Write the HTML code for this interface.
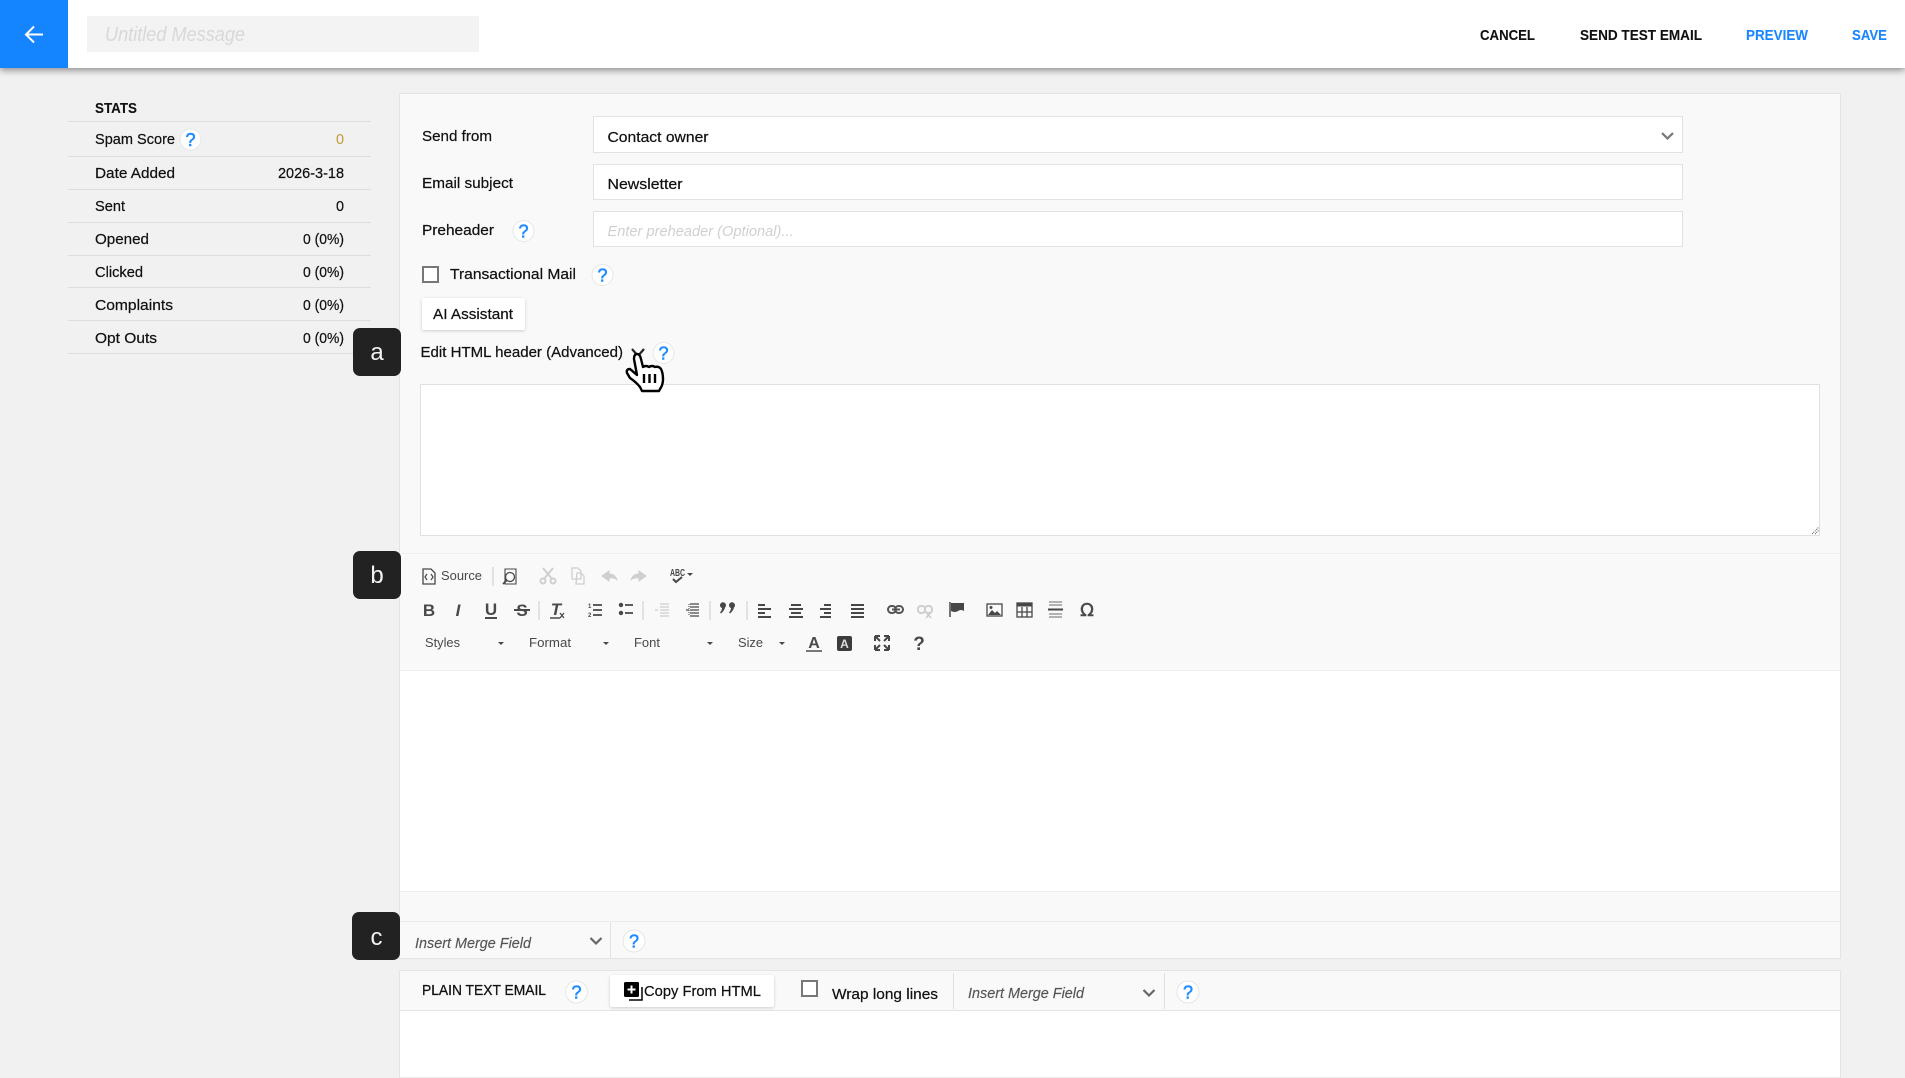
<!DOCTYPE html>
<html lang="en"><head><meta charset="utf-8"><title>Untitled Message</title>
<style>
html,body{margin:0;padding:0;width:1905px;height:1078px;overflow:hidden;background:#f1f1f1}
.b{position:absolute;box-sizing:border-box}
svg{position:absolute;left:0;top:0}
text{font-family:"Liberation Sans",sans-serif;font-size:15px;fill:#111;stroke:#111;stroke-width:.22}
.i{font-style:italic;stroke:none}.m{fill:#555;font-style:italic;stroke:#555;stroke-width:.15}.s{font-weight:bold;stroke-width:.1}
.h{font-size:18px;fill:#1f8bff;stroke:#1f8bff;stroke-width:.55;text-anchor:middle}
.k{font-size:13px;fill:#484848;stroke:none}
.t{font-size:17px;font-weight:bold;fill:#4a4a4a;stroke:none;text-anchor:middle}
.w{font-size:24px;fill:#f2f2f2;stroke:none;text-anchor:middle}
.hc{fill:#fff;stroke:#e6e6e6;stroke-width:1}
.ic{fill:none;stroke:#474747;stroke-width:2}
.dis{fill:none;stroke:#cfcfcf;stroke-width:2}
.bl{font-weight:bold;fill:#1a86ff;stroke:#1a86ff;stroke-width:.1}
</style></head><body>
<div class="b" style="left:399px;top:93px;width:1442px;height:866px;background:#f9f9f9;border:1px solid #e4e4e4"></div>
<div class="b" style="left:0;top:0;width:1905px;height:68px;background:#fff;box-shadow:0 2px 7px rgba(0,0,0,.45)"></div>
<div class="b" style="left:0;top:0;width:68px;height:68px;background:#1584ff"></div>
<div class="b" style="left:87px;top:16px;width:392px;height:36px;background:#f3f3f3"></div>
<div class="b" style="left:68px;top:121px;width:303px;height:1px;background:#ddd"></div>
<div class="b" style="left:68px;top:156px;width:303px;height:1px;background:#ddd"></div>
<div class="b" style="left:68px;top:189px;width:303px;height:1px;background:#ddd"></div>
<div class="b" style="left:68px;top:222px;width:303px;height:1px;background:#ddd"></div>
<div class="b" style="left:68px;top:255px;width:303px;height:1px;background:#ddd"></div>
<div class="b" style="left:68px;top:287px;width:303px;height:1px;background:#ddd"></div>
<div class="b" style="left:68px;top:320px;width:303px;height:1px;background:#ddd"></div>
<div class="b" style="left:68px;top:353px;width:303px;height:1px;background:#ddd"></div>
<div class="b" style="left:593px;top:116px;width:1090px;height:37px;background:#fff;border:1px solid #e2e2e2"></div>
<div class="b" style="left:593px;top:164px;width:1090px;height:36px;background:#fff;border:1px solid #e2e2e2"></div>
<div class="b" style="left:593px;top:211px;width:1090px;height:36px;background:#fff;border:1px solid #e2e2e2"></div>
<div class="b" style="left:422px;top:266px;width:17px;height:17px;background:#fff;border:2px solid #777"></div>
<div class="b" style="left:422px;top:298px;width:103px;height:32px;background:#fff;border-radius:2px;box-shadow:0 1px 3px rgba(0,0,0,.18)"></div>
<div class="b" style="left:420px;top:384px;width:1400px;height:152px;background:#fff;border:1px solid #e0e0e0"></div>
<div class="b" style="left:400px;top:553px;width:1440px;height:1px;background:#efefef"></div>
<div class="b" style="left:400px;top:670px;width:1440px;height:221px;background:#fff;border-top:1px solid #efefef"></div>
<div class="b" style="left:400px;top:891px;width:1440px;height:1px;background:#efefef"></div>
<div class="b" style="left:400px;top:921px;width:1440px;height:1px;background:#ececec"></div>
<div class="b" style="left:610px;top:922px;width:1px;height:36px;background:#e4e4e4"></div>
<div class="b" style="left:399px;top:970px;width:1442px;height:108px;background:#fff;border:1px solid #e4e4e4;border-bottom:1px solid #e9e9e9"></div>
<div class="b" style="left:400px;top:971px;width:1440px;height:40px;background:#f9f9f9;border-bottom:1px solid #e2e2e2"></div>
<div class="b" style="left:610px;top:975px;width:164px;height:32px;background:#fff;border-radius:2px;box-shadow:0 1px 3px rgba(0,0,0,.18)"></div>
<div class="b" style="left:801px;top:980px;width:17px;height:17px;background:#fff;border:2px solid #777"></div>
<div class="b" style="left:953px;top:973px;width:1px;height:36px;background:#e0e0e0"></div>
<div class="b" style="left:1164px;top:973px;width:1px;height:36px;background:#e0e0e0"></div>
<div class="b" style="left:353px;top:328px;width:48px;height:48px;background:#222;border-radius:7px"></div>
<div class="b" style="left:353px;top:551px;width:48px;height:48px;background:#222;border-radius:7px"></div>
<div class="b" style="left:352px;top:912px;width:48px;height:48px;background:#222;border-radius:7px"></div>

<svg width="1905" height="1078" viewBox="0 0 1905 1078" xmlns="http://www.w3.org/2000/svg">
<!-- header -->
<path d="M43 34.500H27M34 26.500l-8 8 8 8" fill="none" stroke="#fff" stroke-width="2"/>
<text class="i" x="105" y="41" style="font-size:20px;fill:#d8d8d8" textLength="140" lengthAdjust="spacingAndGlyphs">Untitled Message</text>
<text class="s" x="1480" y="40" textLength="55" lengthAdjust="spacingAndGlyphs" style="font-size:15px">CANCEL</text>
<text class="s" x="1580" y="40" textLength="122" lengthAdjust="spacingAndGlyphs" style="font-size:15px">SEND TEST EMAIL</text>
<text class="bl" x="1746" y="40" textLength="62" lengthAdjust="spacingAndGlyphs" style="font-size:15px">PREVIEW</text>
<text class="bl" x="1852" y="40" textLength="35" lengthAdjust="spacingAndGlyphs" style="font-size:15px">SAVE</text>
<!-- stats -->
<text class="s" x="95" y="113" textLength="42" lengthAdjust="spacingAndGlyphs" style="font-size:15px">STATS</text>
<text x="95" y="144" textLength="80" lengthAdjust="spacingAndGlyphs">Spam Score</text>
<text x="95" y="178" textLength="80" lengthAdjust="spacingAndGlyphs">Date Added</text>
<text x="95" y="211" textLength="30" lengthAdjust="spacingAndGlyphs">Sent</text>
<text x="95" y="244" textLength="54" lengthAdjust="spacingAndGlyphs">Opened</text>
<text x="95" y="277" textLength="48" lengthAdjust="spacingAndGlyphs">Clicked</text>
<text x="95" y="310" textLength="78" lengthAdjust="spacingAndGlyphs">Complaints</text>
<text x="95" y="343" textLength="62" lengthAdjust="spacingAndGlyphs">Opt Outs</text>
<text x="336" y="144" style="fill:#c49a3a;stroke:none" textLength="8" lengthAdjust="spacingAndGlyphs">0</text>
<text x="278" y="178" textLength="66" lengthAdjust="spacingAndGlyphs">2026-3-18</text>
<text x="336" y="211" textLength="8" lengthAdjust="spacingAndGlyphs">0</text>
<text x="303" y="244" textLength="41" lengthAdjust="spacingAndGlyphs">0 (0%)</text>
<text x="303" y="277" textLength="41" lengthAdjust="spacingAndGlyphs">0 (0%)</text>
<text x="303" y="310" textLength="41" lengthAdjust="spacingAndGlyphs">0 (0%)</text>
<text x="303" y="343" textLength="41" lengthAdjust="spacingAndGlyphs">0 (0%)</text>
<circle class="hc" cx="190.500" cy="139.500" r="10.500"/><text class="h" x="190.500" y="146">?</text>
<!-- form -->
<text x="422" y="141" textLength="70" lengthAdjust="spacingAndGlyphs">Send from</text>
<text x="422" y="188" textLength="91" lengthAdjust="spacingAndGlyphs">Email subject</text>
<text x="422" y="235" textLength="72" lengthAdjust="spacingAndGlyphs">Preheader</text>
<circle class="hc" cx="523.500" cy="231" r="10.500"/><text class="h" x="523.500" y="237.500">?</text>
<text x="607.500" y="142" textLength="101" lengthAdjust="spacingAndGlyphs">Contact owner</text>
<text x="607.500" y="189" textLength="75" lengthAdjust="spacingAndGlyphs">Newsletter</text>
<text class="i" x="607.500" y="236" style="fill:#d0d0d0" textLength="186" lengthAdjust="spacingAndGlyphs">Enter preheader (Optional)...</text>
<path d="M1662 133l5.500 5.500 5.500-5.500" fill="none" stroke="#777" stroke-width="2.200"/>
<text x="450" y="279" textLength="126" lengthAdjust="spacingAndGlyphs">Transactional Mail</text>
<circle class="hc" cx="602.500" cy="275" r="10.500"/><text class="h" x="602.500" y="281.500">?</text>
<text x="433" y="319" textLength="80" lengthAdjust="spacingAndGlyphs">AI Assistant</text>
<text x="420.500" y="357" textLength="202.500" lengthAdjust="spacingAndGlyphs">Edit HTML header (Advanced)</text>
<circle class="hc" cx="663.500" cy="353" r="10.500"/><text class="h" x="663.500" y="359.500">?</text>
<path d="M632 349l6 7 6-7" fill="none" stroke="#222" stroke-width="2.200"/>
<!-- hand cursor -->
<path d="M634 359q0-5 3-5 3 0 4 5l2 8q3-2 6 0 3-2 6 0 4-1 6 2 2 4 2 10 0 6-3 10l-1 2h-17l-2-4q-4-5-10-9l-3-5q-1-4 3-4l7 6z" fill="#fff" stroke="#000" stroke-width="2.400" stroke-linejoin="round"/>
<path d="M644 374v9M649.500 374v9M655 374v9" stroke="#000" stroke-width="2.400"/>
<text class="w" x="377" y="360">a</text>
<text class="w" x="377" y="583">b</text>
<text class="w" x="376.500" y="945">c</text>
<path d="M1812 534l7-7M1815 534l4-4" stroke="#555" stroke-width="1" stroke-dasharray="1 1"/>
<!-- toolbar row 1 -->
<path d="M423 569h8l4 4v11h-12z" class="ic" style="stroke-width:1.300"/>
<path d="M427 574l-2 3 2 3M431 574l2 3-2 3" fill="none" stroke="#474747" stroke-width="1.200"/>
<text class="k" x="441" y="580" textLength="41" lengthAdjust="spacingAndGlyphs">Source</text>
<path d="M493 567v19" stroke="#ccc"/>
<path d="M505 569h11v15h-11z" class="ic" style="stroke-width:1.100"/><circle cx="510" cy="577" r="4.500" fill="#fafafa" stroke="#474747" stroke-width="1.300"/><path d="M507 580l-4 4" stroke="#474747" stroke-width="1.800"/>
<path d="M543 568l9 11M553 568l-9 11" class="dis"/><circle cx="543" cy="581" r="2.500" class="dis"/><circle cx="553" cy="581" r="2.500" class="dis"/>
<path d="M572 568h6l3 3v8h-9z M577 573h4l3 3v8h-8z" fill="#fafafa" stroke="#cfcfcf" stroke-width="1.300"/>
<path d="M602 576l7-5v3q6 0 8 6-3-3-8-2v3z" fill="#cfcfcf" stroke="#cfcfcf"/>
<path d="M646 576l-7-5v3q-6 0-8 6 3-3 8-2v3z" fill="#cfcfcf" stroke="#cfcfcf"/>
<text x="670" y="576" style="font-size:10px;font-weight:bold;fill:#474747;stroke:none" textLength="15" lengthAdjust="spacingAndGlyphs">ABC</text>
<path d="M673 579l3 3 6-5" fill="none" stroke="#474747" stroke-width="2"/><path d="M687 573h6l-3 3z" fill="#474747"/>
<!-- toolbar row 2 -->
<text class="t" x="429" y="616">B</text>
<text class="t" x="458" y="616" style="font-style:italic">I</text>
<text class="t" x="491" y="615">U</text><path d="M485 618h12" stroke="#4a4a4a" stroke-width="2"/>
<text class="t" x="522" y="616">S</text><path d="M514 610h16" stroke="#4a4a4a" stroke-width="2"/>
<path d="M539 601v19" stroke="#ccc"/>
<text class="t" x="556" y="615" style="font-style:italic">T</text><path d="M550 618h10" stroke="#4a4a4a" stroke-width="1.500"/><path d="M560 613l4 5M564 613l-4 5" stroke="#4a4a4a" stroke-width="1.300"/>
<path d="M593 605h9M593 610h9M593 615h9" stroke="#474747" stroke-width="1.800"/>
<text x="588" y="608" style="font-size:6px;font-weight:bold;fill:#474747;stroke:none">1</text><text x="588" y="617" style="font-size:6px;font-weight:bold;fill:#474747;stroke:none">2</text>
<circle cx="621" cy="605" r="2.200" fill="#474747"/><circle cx="621" cy="613" r="2.200" fill="#474747"/><path d="M625 605h8M625 613h8" stroke="#474747" stroke-width="1.800"/>
<path d="M643 601v19" stroke="#ccc"/>
<path d="M660 604h9M660 607h9M660 610h9M660 613h9M660 616h9M655 610h3" stroke="#cfcfcf" stroke-width="1.300"/>
<path d="M690 604h9M690 607h9M690 610h9M690 613h9M690 616h9M686 610h3" stroke="#474747" stroke-width="1.300"/><path d="M689 604v12" stroke="#474747" stroke-dasharray="1 1"/>
<path d="M710 601v19" stroke="#ccc"/>
<path d="M720 605.500a3 3 0 1 1 5 2q-.5 3-4 6l-1-1q2-2 2-4.500a3 3 0 0 1-2-2.500zM729 605.500a3 3 0 1 1 5 2q-.5 3-4 6l-1-1q2-2 2-4.500a3 3 0 0 1-2-2.500z" fill="#474747"/>
<path d="M747 601v19" stroke="#ccc"/>
<path d="M758 605h7M758 609h13M758 613h7M758 617h13" stroke="#474747" stroke-width="2"/>
<path d="M791 605h10M789 609h14M791 613h10M789 617h14" stroke="#474747" stroke-width="2"/>
<path d="M824 605h7M820 609h11M824 613h7M820 617h11" stroke="#474747" stroke-width="2"/>
<path d="M851 605h13M851 609h13M851 613h13M851 617h13" stroke="#474747" stroke-width="2"/>
<rect x="888" y="606" width="8" height="7" rx="3.500" fill="none" stroke="#555" stroke-width="2"/><rect x="895" y="606" width="8" height="7" rx="3.500" fill="none" stroke="#555" stroke-width="2"/><path d="M892 609.500h8" stroke="#555" stroke-width="2"/>
<rect x="918" y="606" width="7" height="7" rx="3" class="dis"/><rect x="925" y="606" width="7" height="7" rx="3" class="dis"/><path d="M926 612l5 6M931 612l-5 6" stroke="#ccc" stroke-width="1.500"/>
<path d="M950 602v15" stroke="#474747" stroke-width="1.500"/><path d="M951 603h13v8q-3-2-6 0t-7 0z" fill="#474747"/>
<rect x="987" y="604" width="15" height="12" fill="#fafafa" stroke="#474747" stroke-width="1.300"/><path d="M988 615l4-5 3 3 2-2 4 4z" fill="#474747"/><circle cx="991" cy="607.500" r="1.500" fill="#474747"/>
<rect x="1017" y="603" width="15" height="14" fill="#fafafa" stroke="#474747" stroke-width="1.300"/><path d="M1017 605h15" stroke="#474747" stroke-width="3"/><path d="M1022 607v10M1027 607v10M1017 612h15" stroke="#474747" stroke-width="1.300"/>
<path d="M1049 602h13M1049 605h13M1049 614h13M1049 617h13" stroke="#888" stroke-width="1.300"/><path d="M1048 609.500h15" stroke="#444" stroke-width="2"/>
<text class="t" x="1087" y="616" style="font-size:18px;font-weight:normal;font-family:'DejaVu Sans',sans-serif;stroke:#4a4a4a;stroke-width:.5">Ω</text>
<!-- toolbar row 3 -->
<text class="k" x="425" y="647" textLength="35" lengthAdjust="spacingAndGlyphs">Styles</text><path d="M498 642h6l-3 3z" fill="#474747"/>
<text class="k" x="529" y="647" textLength="42" lengthAdjust="spacingAndGlyphs">Format</text><path d="M603 642h6l-3 3z" fill="#474747"/>
<text class="k" x="634" y="647" textLength="26" lengthAdjust="spacingAndGlyphs">Font</text><path d="M707 642h6l-3 3z" fill="#474747"/>
<text class="k" x="738" y="647" textLength="25" lengthAdjust="spacingAndGlyphs">Size</text><path d="M779 642h6l-3 3z" fill="#474747"/>
<text class="t" x="814" y="648" style="font-size:16px">A</text><path d="M806 651h16" stroke="#777" stroke-width="2"/>
<rect x="837" y="636" width="15" height="15" rx="2" fill="#3c3c3c"/><text x="844.500" y="648" text-anchor="middle" style="font-size:12px;font-weight:bold;fill:#ddd;stroke:none">A</text>
<path d="M875 636h5M875 636v5M889 636h-5M889 636v5M875 650h5M875 650v-5M889 650h-5M889 650v-5M876 637l4 4M888 637l-4 4M876 649l4-4M888 649l-4-4" stroke="#474747" stroke-width="2"/>
<text class="t" x="919" y="650" style="font-size:19px">?</text>
<!-- merge -->
<text class="m" x="415" y="948" textLength="116" lengthAdjust="spacingAndGlyphs">Insert Merge Field</text>
<path d="M590.500 938l5.500 5.500 5.500-5.500" fill="none" stroke="#666" stroke-width="2.200"/>
<circle class="hc" cx="634" cy="941" r="11"/><text class="h" x="634" y="947.500">?</text>
<!-- plain text -->
<text x="422" y="995" textLength="124" lengthAdjust="spacingAndGlyphs" style="stroke-width:.3">PLAIN TEXT EMAIL</text>
<circle class="hc" cx="576.500" cy="992" r="11"/><text class="h" x="576.500" y="998.500">?</text>
<path d="M629 1000h13v-13" fill="none" stroke="#000" stroke-width="1.500"/><rect x="624" y="982" width="15" height="15" rx="1.500" fill="#000"/><path d="M631.500 985.500v8M627.500 989.500h8" stroke="#fff" stroke-width="2"/>
<text x="644" y="996" textLength="117" lengthAdjust="spacingAndGlyphs">Copy From HTML</text>
<text x="832" y="999" textLength="106" lengthAdjust="spacingAndGlyphs">Wrap long lines</text>
<text class="m" x="968" y="998" textLength="116" lengthAdjust="spacingAndGlyphs">Insert Merge Field</text>
<path d="M1143.500 990l5.500 5.500 5.500-5.500" fill="none" stroke="#666" stroke-width="2.200"/>
<circle class="hc" cx="1188" cy="992" r="11"/><text class="h" x="1188" y="998.500">?</text>
</svg>
</body></html>
